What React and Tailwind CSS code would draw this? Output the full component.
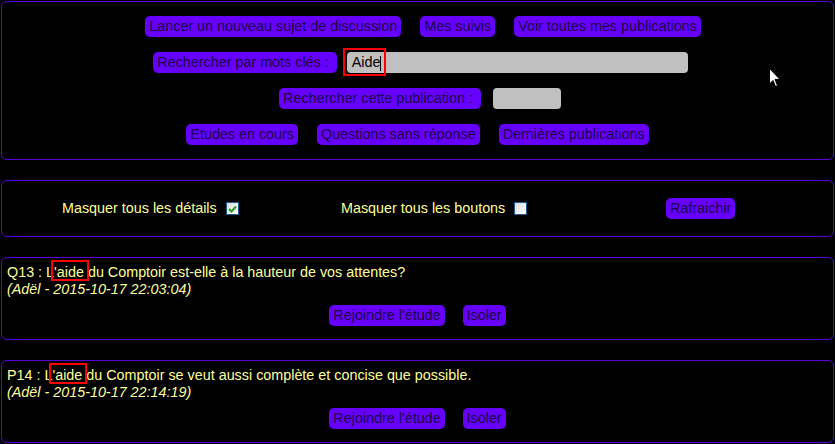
const font = { fontFamily: '"Liberation Sans", Arial, sans-serif' };

function Btn({ children }) {
  return (
    <span className="inline-block rounded-[5px] bg-[#6600ff] px-[4px] py-[2px] text-[14.35px] leading-[17px] text-[#1c0040] whitespace-nowrap">
      {children}
    </span>
  );
}

function Check({ checked }) {
  return (
    <span className="inline-flex h-[13px] w-[13px] items-center justify-center border border-[#1f5a8e] bg-gradient-to-br from-[#dcdcdc] to-[#ffffff]">
      {checked && (
        <svg width="9" height="8" viewBox="0 0 9 8">
          <path d="M1 4 L3.5 6.5 L8 1.5" fill="none" stroke="#21a121" strokeWidth="2" />
        </svg>
      )}
    </span>
  );
}

function Mark({ children }) {
  return (
    <span className="relative">
      {children}
      <span className="absolute -left-[3px] -top-[4px] -bottom-[1px] -right-[1px] border-2 border-[#ff0000]" />
    </span>
  );
}

function Panel({ className = "", children }) {
  return <div className={"rounded-[6px] border border-[#5c00e0] " + className}>{children}</div>;
}

function Post({ code, rest, meta }) {
  return (
    <Panel className="mt-[20px] pl-[5px] pt-[6px] pb-[13px] text-[14.35px] leading-[17px] text-[#ffff99]">
      <div>
        {code} : L<Mark>'aide </Mark>{rest}
      </div>
      <div className="italic">{meta}</div>
      <div className="mt-[7px] flex justify-center gap-[18px] pr-[5px]">
        <Btn>Rejoindre l'étude</Btn>
        <Btn>Isoler</Btn>
      </div>
    </Panel>
  );
}

export default function App() {
  return (
    <div className="relative min-h-screen bg-black p-[1px]" style={font}>
      <Panel className="pt-[14px] pb-[14px] flex flex-col gap-[15px]">
        <div className="flex justify-center gap-[19px] pl-[11px]">
          <Btn>Lancer un nouveau sujet de discussion</Btn>
          <Btn>Mes suivis</Btn>
          <Btn>Voir toutes mes publications</Btn>
        </div>
        <div className="flex justify-center items-center gap-[10px] pl-[6px]">
          <Btn>Rechercher par mots clés :{"\u00a0"}</Btn>
          <div className="relative h-[21px] w-[341px] rounded-[4px] bg-[#c0c0c0] pl-[5px] text-[14.35px] leading-[21px] text-black">
            <span>Aide</span>
            <span className="inline-block h-[15px] w-px bg-black align-middle" />
            <span className="absolute -left-[4px] -top-[4px] h-[28px] w-[43px] border-2 border-[#ff0000]" />
          </div>
        </div>
        <div className="flex justify-center items-center gap-[12px] pl-[5px]">
          <Btn>Rechercher cette publication :{"\u00a0"}</Btn>
          <div className="h-[21px] w-[68px] rounded-[4px] bg-[#c0c0c0]" />
        </div>
        <div className="flex justify-center gap-[19px]">
          <Btn>Etudes en cours</Btn>
          <Btn>Questions sans réponse</Btn>
          <Btn>Dernières publications</Btn>
        </div>
      </Panel>

      <Panel className="mt-[20px] h-[57px] flex items-center text-[14.35px] leading-[17px] text-[#ffff99]">
        <div className="w-[339px] pl-[60px] flex items-center gap-[9px]">
          <span>Masquer tous les détails</span>
          <Check checked />
        </div>
        <div className="w-[325px] flex items-center gap-[9px]">
          <span>Masquer tous les boutons</span>
          <Check />
        </div>
        <Btn>Rafraichir</Btn>
      </Panel>

      <Post
        code="Q13"
        rest="du Comptoir est-elle à la hauteur de vos attentes?"
        meta="(Adël - 2015-10-17 22:03:04)"
      />
      <Post
        code="P14"
        rest="du Comptoir se veut aussi complète et concise que possible."
        meta="(Adël - 2015-10-17 22:14:19)"
      />

      <svg className="absolute left-[769px] top-[68px]" width="13" height="21" viewBox="0 0 13 21">
        <path d="M0.5 0.5 L0.5 16 L4 12.5 L6.5 18.5 L8.5 17.5 L6 11.5 L11 11.5 Z" fill="#fff" stroke="#000" strokeWidth="1" />
      </svg>
    </div>
  );
}
